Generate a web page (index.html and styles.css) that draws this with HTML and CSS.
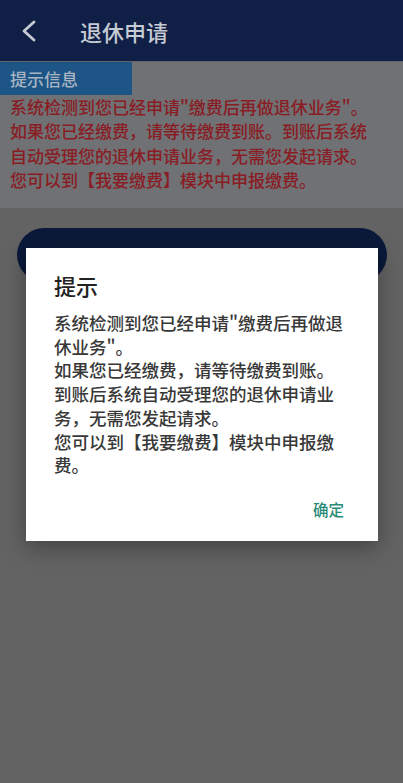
FILE: index.html
```html
<!DOCTYPE html>
<html lang="zh-CN">
<head>
<meta charset="utf-8">
<title>退休申请</title>
<link rel="stylesheet" href="styles.css">
</head>
<body>
<div class="screen">
  <header class="topbar">
    <span class="back">
      <svg width="16" height="22" viewBox="0 0 16 22"><polyline points="13,2 3,11 13,20" fill="none" stroke="#c5cad3" stroke-width="2.8" stroke-linecap="round" stroke-linejoin="round"/></svg>
    </span>
    <h1 class="title">退休申请</h1>
  </header>
  <section class="info">
    <div class="tab">提示信息</div>
    <p class="notice">系统检测到您已经申请"缴费后再做退休业务"。<br>如果您已经缴费，请等待缴费到账。到账后系统<br>自动受理您的退休申请业务，无需您发起请求。<br>您可以到【我要缴费】模块中申报缴费。</p>
  </section>
  <div class="action">
    <div class="pill"></div>
  </div>
  <div class="overlay">
    <div class="dialog">
      <h2 class="dlg-title">提示</h2>
      <div class="dlg-body">
        <p>系统检测到您已经申请"缴费后再做退休业务"。</p>
        <p>如果您已经缴费，请等待缴费到账。</p>
        <p>到账后系统自动受理您的退休申请业务，无需您发起请求。</p>
        <p>您可以到【我要缴费】模块中申报缴费。</p>
      </div>
      <div class="dlg-actions">
        <span class="ok">确定</span>
      </div>
    </div>
  </div>
</div>
</body>
</html>
```
FILE: styles.css
```css
* { box-sizing: border-box; }
html, body {
  margin: 0;
  padding: 0;
  background: #636363;
  font-family: "Noto Sans CJK SC", "Noto Sans", sans-serif;
}
.screen {
  position: relative;
  width: 403px;
  height: 783px;
  overflow: hidden;
  background: #636363;
}
.topbar {
  height: 61px;
  background: #0f1f46;
  display: flex;
  align-items: center;
  padding-left: 21px;
}
.back {
  display: flex;
  width: 16px;
  height: 22px;
  margin-top: 1px;
}
.title {
  margin: 0 0 0 43px;
  font-size: 22px;
  font-weight: 500;
  color: #c5cad3;
  line-height: 30px;
}
.info {
  background: #6f7174;
  padding-bottom: 16px;
  margin-top: 1px;
}
.tab {
  width: 132px;
  height: 33px;
  background: #1c5586;
  color: #a9b4c2;
  font-size: 17px;
  font-weight: 500;
  line-height: 33px;
  padding-left: 10px;
}
.notice {
  margin: 0;
  padding: 0 10px;
  color: #8a1c24;
  font-size: 17px;
  font-weight: 500;
  line-height: 24.3px;
  white-space: nowrap;
}
.action {
  padding: 20px 16px 0 17px;
}
.pill {
  height: 54px;
  border-radius: 27px;
  background: #0b1a3a;
}
.overlay {
  position: absolute;
  inset: 0;
  padding: 248px 25px 0 26px;
}
.dialog {
  background: #ffffff;
  height: 293px;
  padding: 22px 28px 0 28px;
  box-shadow: 0 6px 22px rgba(0, 0, 0, 0.35);
}
.dlg-title {
  margin: 0;
  font-size: 22px;
  font-weight: 500;
  line-height: 30px;
  color: #222222;
}
.dlg-body {
  margin-top: 11px;
  color: #383838;
  font-size: 17.5px;
  font-weight: 500;
  line-height: 23.7px;
}
.dlg-body p {
  margin: 0;
}
.dlg-actions {
  display: flex;
  justify-content: flex-end;
  margin-top: 22px;
  padding-right: 6px;
}
.ok {
  color: #2a8a78;
  font-size: 15.5px;
  font-weight: 500;
  line-height: 20px;
}
```
